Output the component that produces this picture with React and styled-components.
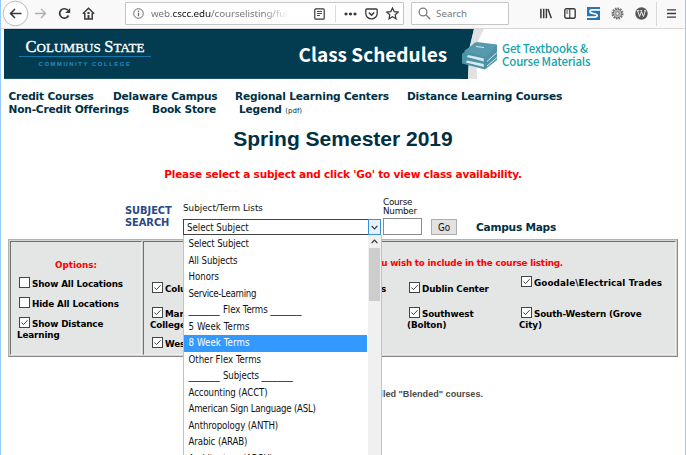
import React from "react";
import styled, { createGlobalStyle, css } from "styled-components";

const GlobalStyle = createGlobalStyle`
  *, *::before, *::after { box-sizing: border-box; }
  body { margin: 0; background: #fff; overflow: hidden; }
`;

const verdana = `"DejaVu Sans", Verdana, sans-serif`;
const tahoma = `"DejaVu Sans Condensed", "DejaVu Sans", Tahoma, sans-serif`;
const segoe = `"Noto Sans", "Segoe UI", sans-serif`;
const source = `"Noto Sans CJK SC", "Source Sans Pro", sans-serif`;
const navy = "#003044";

const Window = styled.div`
  width: 686px;
  height: 455px;
  overflow: hidden;
  background: #fff;
  border-left: 1px solid #99c9f5;
  border-right: 1px solid #99c9f5;
`;

/* ---------- browser chrome ---------- */
const Toolbar = styled.header`
  display: flex;
  align-items: center;
  height: 29px;
  padding-bottom: 1px;
  background: #f9f9fa;
  border-bottom: 1px solid #d8d8da;
`;
const ToolIcon = styled.svg`
  flex: none;
  display: block;
  width: ${(p) => p.$w || 14}px;
  height: ${(p) => p.$h || p.$w || 14}px;
  margin-left: ${(p) => p.$gap || 0}px;
  fill: none;
  stroke: ${(p) => p.$color || "#3a3a3d"};
  stroke-width: ${(p) => p.$stroke || 1.4};
`;
const Field = styled.div`
  display: flex;
  align-items: center;
  flex: none;
  width: ${(p) => p.$width}px;
  height: 23px;
  margin-left: ${(p) => p.$gap}px;
  background: #fff;
  border: 1px solid #c6c6c8;
  border-radius: 1px;
  font: 9.8px/20px ${segoe};
  color: #77777a;
`;
const Url = styled.span`
  width: 138px;
  margin-left: 7px;
  overflow: hidden;
  white-space: nowrap;
  letter-spacing: -0.08px;
  mask-image: linear-gradient(90deg, #000 112px, transparent 138px);
  b { font-weight: 400; color: #111; }
`;
const Placeholder = styled.span`
  margin-left: 5px;
`;
const Divider = styled.i`
  flex: none;
  width: 1px;
  height: ${(p) => p.$height}px;
  margin-left: ${(p) => p.$gap}px;
  background: #d9d9db;
`;

/* ---------- banner ---------- */
const Banner = styled.div`
  display: flex;
  height: 50px;
  margin-left: 3px;
`;
const BannerDark = styled.div`
  display: flex;
  width: 457px;
  background: #033c51;
  border-top: 1px solid #022c3d;
  border-bottom: 1px solid #1b5266;
`;
const Logo = styled.div`
  width: 132px;
  margin: 8px 0 0 15px;
  text-align: center;
`;
const LogoName = styled.div`
  height: 19px;
  border-bottom: 1px solid #1777a8;
  font: 13px/17px "Liberation Serif", serif;
  letter-spacing: 0.1px;
  white-space: nowrap;
  color: #fff;
  -webkit-text-stroke: 0.35px #fff;
  b { font-size: 16.5px; font-weight: 400; }
`;
const LogoSub = styled.div`
  font: bold 5.8px/14px "Liberation Sans", sans-serif;
  letter-spacing: 1.62px;
  white-space: nowrap;
  color: #2a8cc0;
`;
const BannerTitle = styled.h1`
  margin: 0 0 0 147.5px;
  font: bold 19px/48px ${source};
  color: #fff;
  white-space: nowrap;
`;
const BannerArt = styled.svg`
  flex: none;
  width: 40px;
  height: 50px;
`;
const Textbooks = styled.div`
  margin: 13px 0 0 1px;
  font: 500 11.5px/13px ${source};
  letter-spacing: -0.18px;
  color: #12a3ad;
  white-space: nowrap;
`;

/* ---------- page head ---------- */
const Nav = styled.nav`
  padding: 11px 0 0 7.5px;
  font: bold 10.6px/13px ${verdana};
  letter-spacing: -0.18px;
  color: ${navy};
  white-space: nowrap;
`;
const NavRow = styled.div`
  display: flex;
`;
const NavItem = styled.span`
  width: ${(p) => p.$width}px;
  small { font-size: 7px; font-weight: 400; letter-spacing: 0; }
`;
const Title = styled.h2`
  margin: 9px 0 0;
  text-align: center;
  font: bold 21px/24px "Liberation Sans", Arial, sans-serif;
  color: ${navy};
`;
const Notice = styled.p`
  margin: 16px 0 0;
  text-align: center;
  font: bold 10.5px/14px ${verdana};
  letter-spacing: -0.18px;
  color: #f00;
`;

/* ---------- search form ---------- */
const Form = styled.div`
  display: flex;
  align-items: flex-end;
  height: 54px;
  padding-left: 124px;
  font: 8.8px/9px ${verdana};
  color: #111;
`;
const FormLabel = styled.div`
  width: 58px;
  padding-bottom: 6px;
  font: bold 9.9px/12px ${verdana};
  letter-spacing: -0.05px;
  color: #2b4a84;
`;
const FieldLabel = styled.div`
  white-space: nowrap;
  letter-spacing: ${(p) => p.$ls}px;
  margin-bottom: ${(p) => p.$gap}px;
`;
const SubjectField = styled.div`
  position: relative;
  width: 198px;
`;
const Select = styled.div`
  display: flex;
  justify-content: space-between;
  height: 16px;
  border: 1px solid #444;
  padding-left: 3px;
  background: #fff;
  font: 9.6px/15px ${tahoma};
`;
const SelectButton = styled.span`
  display: grid;
  place-items: center;
  width: 13px;
  margin: -1px;
  background: #e5f1fb;
  border: 1px solid #3c8fd6;
`;
const NumberField = styled.div`
  width: 39px;
  margin-left: 2px;
`;
const NumberInput = styled.div`
  height: 17px;
  border: 1px solid #8a8a8a;
  background: #fff;
`;
const GoButton = styled.button`
  width: 26px;
  height: 16px;
  margin: 0 0 0 9px;
  padding: 0;
  border: 1px solid #acacac;
  background: #e2e2e2;
  font: 9.8px/13px ${tahoma};
  color: #111;
`;
const MapsLink = styled.span`
  margin-left: 19px;
  font: bold 10.6px/16px ${verdana};
  letter-spacing: -0.24px;
  color: ${navy};
`;

/* ---------- dropdown ---------- */
const Menu = styled.div`
  position: absolute;
  z-index: 2;
  top: 100%;
  left: 0;
  display: flex;
  width: 199px;
  height: 222px;
  overflow: hidden;
  background: #fff;
  border: 1px solid #c2c2c2;
  border-top: 0;
`;
const Options = styled.ul`
  flex: 1;
  margin: 0;
  padding: 1px 0 0;
  list-style: none;
`;
const Option = styled.li`
  height: 16.5px;
  padding-left: 4.5px;
  font: 9.6px/16.5px ${tahoma};
  letter-spacing: ${(p) => p.$ls}px;
  white-space: nowrap;
  color: #111;
  ${(p) =>
    p.$active &&
    css`
      background: #3399ff;
      color: #fff;
    `}
`;
const Rule = styled.span`
  font: 10.4px/10px ${verdana};
  letter-spacing: 0;
`;
const Scrollbar = styled.div`
  display: flex;
  flex-direction: column;
  align-items: center;
  width: 13px;
  background: #f0f0f0;
  margin-left: 1px;
`;
const ScrollUp = styled.div`
  display: grid;
  place-items: center;
  height: 13px;
`;
const ScrollThumb = styled.div`
  width: 11px;
  height: 53px;
  background: #cdcdcd;
`;
const Chevron = styled.svg`
  width: 7px;
  height: 5px;
  fill: none;
  stroke: #333;
  stroke-width: 1.2;
`;

/* ---------- location options ---------- */
const Panel = styled.section`
  display: flex;
  gap: 1px;
  width: 670px;
  height: 118px;
  margin: 4px 0 0 7px;
  padding: 1px;
  background: #d2d4d4;
  border: 1px solid;
  border-color: #b0b2b2 #858888 #858888 #b0b2b2;
  font: bold 8.8px/11px ${verdana};
  letter-spacing: -0.13px;
  color: #000;
`;
const PanelCell = styled.div`
  width: ${(p) => (p.$width ? p.$width + "px" : "auto")};
  flex: ${(p) => (p.$width ? "none" : "1")};
  background: #e4e6e5;
  border: 1px solid;
  border-color: #6f7272 #f0f0f0 #f0f0f0 #6f7272;
  overflow: hidden;
`;
const CellTitle = styled.div`
  color: #f00;
  margin-top: ${(p) => p.$top}px;
  text-align: ${(p) => (p.$right ? "right" : "center")};
  padding-right: ${(p) => p.$right || 0}px;
  letter-spacing: ${(p) => p.$ls || 0}px;
`;
const OptionList = styled.div`
  display: flex;
  flex-direction: column;
  gap: 9px;
  padding: 8px 18px 0 6px;
`;
const Columns = styled.div`
  display: grid;
  grid-template-columns: 115px 142px 112px 1fr;
  height: 80px;
  padding-left: 6px;
`;
const Column = styled.div`
  display: flex;
  flex-direction: column;
  align-items: ${(p) => (p.$end ? "flex-end" : "stretch")};
  gap: ${(p) => p.$gap}px;
  padding-top: ${(p) => p.$top}px;
  padding-right: ${(p) => p.$end || 0}px;
`;
const CheckLine = styled.div`
  letter-spacing: ${(p) => p.$ls || -0.13}px;
`;
const Box = styled.svg`
  display: inline-block;
  width: 11px;
  height: 11px;
  margin: -4px 2px 0 2px;
  vertical-align: -1px;
  fill: #fff;
  stroke: #444;
`;
const Tight = styled.div`
  margin-top: -6px;
`;
const Footnote = styled.p`
  margin: 31px 0 0;
  padding-right: 202px;
  text-align: right;
  font: bold 9.1px/12px "Liberation Sans", Arial, sans-serif;
  color: #4a4a4a;
`;

const Check = ({ on = true, ls, children }) => (
  <CheckLine $ls={ls}>
    <Box viewBox="0 0 11 11">
      <rect x=".5" y=".5" width="10" height="10" />
      {on && <path d="M2.5 5.5 4.5 7.6 8.6 3.2" fill="none" />}
    </Box>
    {children}
  </CheckLine>
);

const subjects = [
  { text: "Select Subject" },
  { text: "All Subjects" },
  { text: "Honors", ls: 0 },
  { text: "Service-Learning", ls: -0.3 },
  { text: "Flex Terms", ruled: true },
  { text: "5 Week Terms", ls: 0.1 },
  { text: "8 Week Terms", ls: 0.1, active: true },
  { text: "Other Flex Terms", ls: -0.02 },
  { text: "Subjects", ruled: true },
  { text: "Accounting (ACCT)" },
  { text: "American Sign Language (ASL)", ls: -0.23 },
  { text: "Anthropology (ANTH)" },
  { text: "Arabic (ARAB)" },
  { text: "Architecture (ARCH)" },
];

function BrowserBar() {
  return (
    <Toolbar>
      <ToolIcon $w={27} viewBox="0 0 27 27" $gap={1}>
        <circle cx="13.5" cy="13.5" r="12.3" fill="#fff" stroke="#bcbcbe" strokeWidth="1" />
        <path d="M19.5 13.5H9M13 9l-4.5 4.5L13 18" strokeWidth="1.6" />
      </ToolIcon>
      <ToolIcon $w={13} viewBox="0 0 13 13" $gap={5} $color="#b0b0b2">
        <path d="M1 6.5h10M7 2l4.5 4.5L7 11" />
      </ToolIcon>
      <ToolIcon $w={13} viewBox="0 0 13 13" $gap={11} $stroke={1.7}>
        <path d="M10.6 8.5A4.7 4.7 0 1 1 9.8 3.2" />
        <path d="M12.2 1v5H7.2z" fill="#3a3a3d" stroke="none" />
      </ToolIcon>
      <ToolIcon $w={13} viewBox="0 0 13 13" $gap={11} $stroke={1.5}>
        <path d="M.8 6.8 6.5 1.2l5.7 5.6M2.8 6v6h7.4V6" />
        <path d="M6.5 12V8M5.4 6h2.2" strokeWidth="1.9" />
      </ToolIcon>
      <Field $width={279} $gap={30}>
        <ToolIcon $w={11} viewBox="0 0 11 11" $gap={7} $color="#6c6c6e" $stroke={1}>
          <circle cx="5.5" cy="5.5" r="4.8" />
          <path d="M5.5 4.8v3.4M5.5 2.6v1.3" strokeWidth="1.3" />
        </ToolIcon>
        <Url>web.<b>cscc.edu</b>/courselisting/full</Url>
        <ToolIcon $w={11} $h={12} viewBox="0 0 11 12" $gap={25} $stroke={1.2}>
          <rect x=".8" y=".8" width="9.4" height="10.4" rx="1" />
          <path d="M3 3.5h5M3 5.5h5M3 7.5h3" strokeWidth=".9" />
        </ToolIcon>
        <Divider $height={17} $gap={10} />
        <ToolIcon $w={13} $h={4} viewBox="0 0 13 4" $gap={8}>
          <path d="M2 .4a1.6 1.6 0 1 0 .01 0M6.5.4a1.6 1.6 0 1 0 .01 0M11 .4a1.6 1.6 0 1 0 .01 0" fill="#3a3a3d" stroke="none" />
        </ToolIcon>
        <ToolIcon $w={13} $h={12} viewBox="0 0 13 12" $gap={8} $stroke={1.3}>
          <path d="M1.8 1h9.4q1 0 1 1v3.2a5.7 5.7 0 0 1-11.4 0V2q0-1 1-1z" />
          <path d="m3.8 4.5 2.7 2.6 2.7-2.6" strokeWidth="1.5" />
        </ToolIcon>
        <ToolIcon $w={13} viewBox="0 0 13 13" $gap={8} $stroke={1.2}>
          <path d="m6.5.9 1.7 3.7 4 .5-3 2.7.8 4-3.5-2-3.5 2 .8-4-3-2.7 4-.5z" />
        </ToolIcon>
      </Field>
      <Field $width={98} $gap={7}>
        <ToolIcon $w={13} viewBox="0 0 13 13" $gap={6} $color="#7c7c7e" $stroke={1.3}>
          <circle cx="5" cy="5" r="3.9" />
          <path d="m8 8 4.3 4.3" />
        </ToolIcon>
        <Placeholder>Search</Placeholder>
      </Field>
      <ToolIcon $w={12} $h={11} viewBox="0 0 12 11" $gap={31} $stroke={1.5}>
        <path d="M.9.8v9.4M3.7.8v9.4M6.4.8v9.4M8 1l3.3 9.2" />
      </ToolIcon>
      <ToolIcon $w={12} $h={11} viewBox="0 0 12 11" $gap={12} $stroke={1.4}>
        <rect x=".8" y=".8" width="10.4" height="9.4" rx="1.5" />
        <path d="M5.8 1v9M2.2 3h2M2.2 5h2" strokeWidth="1.1" />
      </ToolIcon>
      <ToolIcon $w={13} viewBox="0 0 13 13" $gap={11}>
        <path d="M0 0h13v13H0z" fill="#2874b8" stroke="none" />
        <path d="M13 2.9H5.4q-2.4 0-2.4 1.5T4.8 6.1l3.6.9q1.900.5 1.900 1.6t-2.400 1.500H0" stroke="#fff" strokeWidth="1.8" />
      </ToolIcon>
      <ToolIcon $w={13} viewBox="0 0 13 13" $gap={11} $color="#777">
        <circle cx="6.5" cy="6.5" r="5.3" strokeWidth="1.6" strokeDasharray="1.7 1" />
        <circle cx="6.5" cy="6.5" r="4.3" fill="#bbb" stroke="#666" strokeWidth="1" />
        <circle cx="6.5" cy="6.5" r="1.8" fill="#eee" strokeWidth="1" />
      </ToolIcon>
      <ToolIcon $w={13} viewBox="0 0 13 13" $gap={11}>
        <circle cx="6.5" cy="6.5" r="6.2" fill="#5a5654" stroke="none" />
        <path d="m2.6 3.7 2 5.8 1.9-5 1.9 5 2-5.8M1.8 3.7h2.6M5.2 3.7h2M9.2 3.7h2" stroke="#eee" strokeWidth="1" />
      </ToolIcon>
      <Divider $height={24} $gap={8} />
      <ToolIcon $w={9} $h={9} viewBox="0 0 9 9" $gap={10} $stroke={1.3}>
        <path d="M0 .8h9M0 4.5h9M0 8.2h9" />
      </ToolIcon>
    </Toolbar>
  );
}

function SiteBanner() {
  return (
    <Banner>
      <BannerDark>
        <Logo>
          <LogoName><b>C</b>OLUMBUS <b>S</b>TATE</LogoName>
          <LogoSub>COMMUNITY COLLEGE</LogoSub>
        </Logo>
        <BannerTitle>Class Schedules</BannerTitle>
      </BannerDark>
      <BannerArt viewBox="0 0 40 50">
        <path d="M0 0h13L9 18 7 50H0z" fill="#033c51" />
        <path d="M13 0h10l-8 16 1 34H7l1-30z" fill="#dfe1e3" />
        <path d="m1 25 13-11.5L36 16v15l-12 9.5L1 34.5z" fill="#4d93a8" />
        <path d="m3 22 13-9 20 2.5-11 12.500z" fill="#5799ad" />
        <path d="m6 28 17 4.500q-1-2 0-3L7 26zM5 33.500l18 4.500q-1-2 0-3L6 31.500" fill="#dceaf0" />
        <path d="m26 32.500 10-9M26 37l10-8.500M15 17.500l8 1" fill="none" stroke="#e7f3f6" strokeWidth=".9" />
      </BannerArt>
      <Textbooks>Get Textbooks &amp;<br />Course Materials</Textbooks>
    </Banner>
  );
}

function SubjectSelect() {
  return (
    <SubjectField>
      <FieldLabel $ls={0} $gap={6}>Subject/Term Lists</FieldLabel>
      <Select>
        Select Subject
        <SelectButton>
          <Chevron viewBox="0 0 7 5"><path d="m.6.8 2.9 3L6.4.8" /></Chevron>
        </SelectButton>
      </Select>
      <Menu>
        <Options>
          {subjects.map(({ text, ruled, active, ls = -0.1 }) => (
            <Option key={text} $active={active} $ls={ls}>
              {ruled ? <><Rule>______ </Rule>{text} <Rule>______</Rule></> : text}
            </Option>
          ))}
        </Options>
        <Scrollbar>
          <ScrollUp>
            <Chevron viewBox="0 0 7 5"><path d="m.6 4.2 2.9-3 2.9 3" /></Chevron>
          </ScrollUp>
          <ScrollThumb />
        </Scrollbar>
      </Menu>
    </SubjectField>
  );
}

export default function App() {
  return (
    <Window>
      <GlobalStyle />
      <BrowserBar />
      <SiteBanner />
      <Nav>
        <NavRow>
          <NavItem $width={104.5}>Credit Courses</NavItem>
          <NavItem $width={122}>Delaware Campus</NavItem>
          <NavItem $width={172}>Regional Learning Centers</NavItem>
          <NavItem $width={160}>Distance Learning Courses</NavItem>
        </NavRow>
        <NavRow>
          <NavItem $width={143.5}>Non-Credit Offerings</NavItem>
          <NavItem $width={87}>Book Store</NavItem>
          <NavItem $width={90}>Legend <small>(pdf)</small></NavItem>
        </NavRow>
      </Nav>
      <Title>Spring Semester 2019</Title>
      <Notice>Please select a subject and click 'Go' to view class availability.</Notice>
      <Form>
        <FormLabel>SUBJECT<br />SEARCH</FormLabel>
        <SubjectSelect />
        <NumberField>
          <FieldLabel $ls={-0.25} $gap={2}>Course<br />Number</FieldLabel>
          <NumberInput />
        </NumberField>
        <GoButton>Go</GoButton>
        <MapsLink>Campus Maps</MapsLink>
      </Form>
      <Panel>
        <PanelCell $width={132}>
          <CellTitle $top={18}>Options:</CellTitle>
          <OptionList>
            <Check on={false}>Show All Locations</Check>
            <Check on={false}>Hide All Locations</Check>
            <Check>Show Distance Learning</Check>
          </OptionList>
        </PanelCell>
        <PanelCell>
          <CellTitle $top={16} $right={112} $ls={-0.2}>
            Select the locations you wish to include in the course listing.
          </CellTitle>
          <Columns>
            <Column $top={15} $gap={14}>
              <Check>Columbus</Check>
              <Check>Marion<br />College</Check>
              <Tight><Check>Westerville</Check></Tight>
            </Column>
            <Column $top={15} $gap={14} $end={21}>
              <Check>Locations</Check>
            </Column>
            <Column $top={15} $gap={14}>
              <Check>Dublin Center</Check>
              <Check>Southwest<br />(Bolton)</Check>
            </Column>
            <Column $top={9} $gap={20}>
              <Check ls={0.1}>Goodale\Electrical Trades</Check>
              <Check>South-Western (Grove<br />City)</Check>
            </Column>
          </Columns>
        </PanelCell>
      </Panel>
      <Footnote>called "Blended" courses.</Footnote>
    </Window>
  );
}
